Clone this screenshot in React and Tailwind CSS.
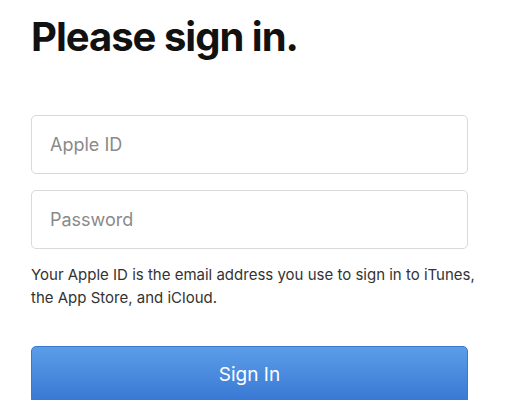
export default function App() {
  return (
    <div className="w-[526px] h-[400px] overflow-hidden bg-white font-['Inter',sans-serif]">
      <div className="pl-[31px] pr-[58px]">
        <h1 className="pt-[13px] text-[40px] leading-[48px] font-bold tracking-[-1px] text-[#111]">
          Please sign in.
        </h1>
        <div className="mt-[54px] flex flex-col gap-[16px]">
          <input
            placeholder="Apple ID"
            className="h-[59px] w-full rounded-[5px] border border-[#d9d9d9] px-[18px] text-[18px] text-[#333] placeholder:text-[#8a8a8a] outline-none"
          />
          <input
            type="password"
            placeholder="Password"
            className="h-[59px] w-full rounded-[5px] border border-[#d9d9d9] px-[18px] text-[18px] text-[#333] placeholder:text-[#8a8a8a] outline-none"
          />
        </div>
        <p className="mt-[14px] w-[450px] text-[15px] leading-[23px] text-[#333]">
          Your Apple ID is the email address you use to sign in to iTunes, the App Store, and iCloud.
        </p>
        <button className="mt-[37px] h-[58px] w-full rounded-[5px] border border-[#3a78d0] bg-gradient-to-b from-[#5c9de8] to-[#3777d3] text-[19px] text-white">
          Sign In
        </button>
      </div>
    </div>
  );
}
